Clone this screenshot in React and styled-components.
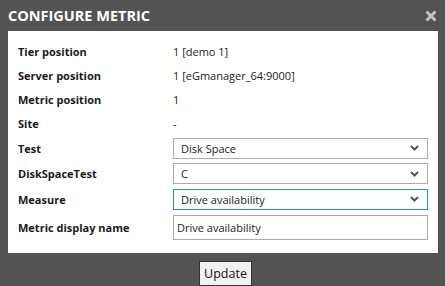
import React from 'react';
import styled, { createGlobalStyle } from 'styled-components';

const GlobalStyle = createGlobalStyle`
  html, body {
    margin: 0;
    padding: 0;
    background: #535353;
  }
  body {
    font-family: "Open Sans", "DejaVu Sans", sans-serif;
  }
`;

const rows = [
  { label: 'Tier position', value: '1 [demo 1]' },
  { label: 'Server position', value: '1 [eGmanager_64:9000]' },
  { label: 'Metric position', value: '1' },
  { label: 'Site', value: '-' },
];

function Chevron() {
  return (
    <svg width="9" height="6" viewBox="0 0 9 6">
      <path d="M1 1 L4.5 4.5 L8 1" fill="none" stroke="#555" strokeWidth="2" />
    </svg>
  );
}

function App() {
  return (
    <>
      <GlobalStyle />
      <Dialog>
        <Header>
          <Title>CONFIGURE METRIC</Title>
          <Close>
            <svg width="12" height="12" viewBox="0 0 12 12">
              <path d="M1.5 1.5 L10.5 10.5 M10.5 1.5 L1.5 10.5" stroke="#c4c4c4" strokeWidth="3" />
            </svg>
          </Close>
        </Header>

        <Panel>
          {rows.map((r) => (
            <Row key={r.label} $h={24}>
              <Label>{r.label}</Label>
              <Value>{r.value}</Value>
            </Row>
          ))}
          <Row $h={26}>
            <Label>Test</Label>
            <Select>
              <span>Disk Space</span>
              <Chevron />
            </Select>
          </Row>
          <Row $h={25}>
            <Label>DiskSpaceTest</Label>
            <Select>
              <span>C</span>
              <Chevron />
            </Select>
          </Row>
          <Row $h={26}>
            <Label>Measure</Label>
            <Select $focused>
              <span>Drive availability</span>
              <Chevron />
            </Select>
          </Row>
          <Row $h={30}>
            <Label>Metric display name</Label>
            <TextInput defaultValue="Drive availability" />
          </Row>
        </Panel>

        <Footer>
          <Button>Update</Button>
        </Footer>
      </Dialog>
    </>
  );
}

const Dialog = styled.div`
  width: 445px;
  height: 286px;
  overflow: hidden;
`;

const Header = styled.div`
  height: 31px;
  display: flex;
  align-items: center;
  justify-content: space-between;
  padding: 0 8px 0 8px;
  box-sizing: border-box;
`;

const Title = styled.div`
  color: #fff;
  font-weight: 700;
  font-size: 14.5px;
  margin-top: -1px;
`;

const Close = styled.div`
  display: flex;
  margin-top: 1px;
`;

const Panel = styled.div`
  margin: 0 7px 0 8px;
  background: #fff;
  padding: 8px 10px 11px 10px;
  display: flex;
  flex-direction: column;
`;

const Row = styled.div`
  display: grid;
  grid-template-columns: 155px 1fr;
  align-items: center;
  height: ${(p) => p.$h}px;
`;

const Label = styled.div`
  font-size: 11px;
  font-weight: 700;
  color: #1a1a1a;
`;

const Value = styled.div`
  font-size: 11px;
  color: #222;
`;

const Select = styled.div`
  height: 21px;
  box-sizing: border-box;
  border: 1px solid ${(p) => (p.$focused ? '#2b8cc8' : '#ababab')};
  display: flex;
  align-items: center;
  justify-content: space-between;
  padding: 0 8px 0 7px;
  font-size: 11px;
  color: #222;
`;

const TextInput = styled.input`
  height: 25px;
  box-sizing: border-box;
  border: 1px solid #ababab;
  padding: 0 3px;
  font-family: "Open Sans", "DejaVu Sans", sans-serif;
  font-size: 11px;
  color: #222;
  outline: none;
  width: 100%;
`;

const Footer = styled.div`
  display: flex;
  justify-content: center;
  padding: 8px 0 0 6px;
`;

const Button = styled.button`
  height: 25px;
  padding: 0 4px;
  background: #f1f1f1;
  border: 1px solid #333;
  border-radius: 0;
  font-family: "Open Sans", "DejaVu Sans", sans-serif;
  font-size: 12.5px;
  color: #111;
`;

export default App;
